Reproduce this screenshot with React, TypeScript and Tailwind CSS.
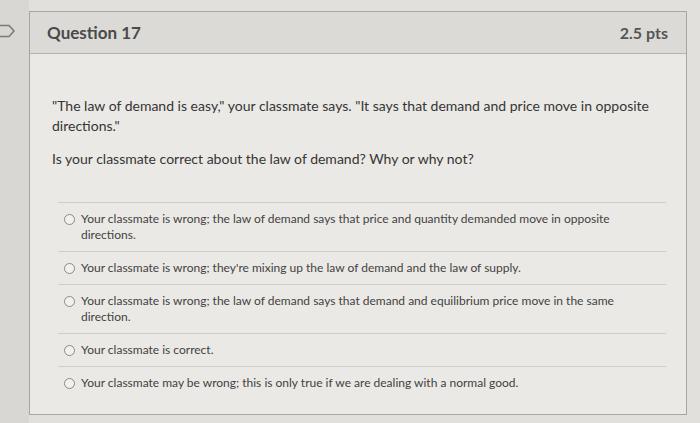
import React from "react";

const answers = [
  "Your classmate is wrong; the law of demand says that price and quantity demanded move in opposite directions.",
  "Your classmate is wrong; they're mixing up the law of demand and the law of supply.",
  "Your classmate is wrong; the law of demand says that demand and equilibrium price move in the same direction.",
  "Your classmate is correct.",
  "Your classmate may be wrong; this is only true if we are dealing with a normal good.",
];

export default function App() {
  return (
    <div
      className="w-[700px] h-[423px] bg-[#e2e0dc] flex overflow-hidden"
      style={{ fontFamily: "Lato, 'Liberation Sans', sans-serif" }}>
      {/* left gutter with bookmark */}
      <div className="w-[29px] shrink-0 bg-[#d9d7d3] pt-[24px]">
        <svg width="18" height="14" viewBox="0 0 18 14" className="-ml-[2px]">
          <path
            d="M1 1.5 H11 L16 7 L11 12.5 H1 Z"
            fill="none"
            stroke="#7a7a7a"
            strokeWidth="1.6"
            strokeLinejoin="round"
          />
        </svg>
      </div>

      <div className="flex-1 mt-[11px] mb-[8px] mr-[13px] border border-[#a8a6a2] bg-[#ebe9e5] flex flex-col">
        {/* header */}
        <div className="h-[42px] shrink-0 bg-[#dcdad6] border-b border-[#b5b3af] flex items-center justify-between pl-[17px] pr-[18px]">
          <h2 className="text-[17px] font-bold text-[#4a4a4a]">Question 17</h2>
          <span className="text-[16px] font-bold text-[#555]">2.5 pts</span>
        </div>

        {/* body */}
        <div className="pt-[42px] pl-[22px] pr-[18px] text-[14px] leading-[20px] text-[#353535]">
          <p>
            "The law of demand is easy," your classmate says. "It says that demand and price move in opposite
            directions."
          </p>
          <p className="mt-[13px]">Is your classmate correct about the law of demand? Why or why not?</p>

          <div className="mt-[33px] ml-[6px] mr-[2px] border-t border-[#cfcdc9]">
            {answers.map((a, i) => (
              <div
                key={i}
                className={`flex items-start gap-[6px] py-[8px] pl-[6px] ${
                  i < answers.length - 1 ? "border-b border-[#cfcdc9]" : ""
                }`}>
                <span className="mt-[3px] w-[11px] h-[11px] shrink-0 rounded-full border border-[#8a8a8a] bg-[#f2f1ee]" />
                <span className="text-[12px] leading-[16px] text-[#424242]">{a}</span>
              </div>
            ))}
          </div>
        </div>
      </div>
    </div>
  );
}
